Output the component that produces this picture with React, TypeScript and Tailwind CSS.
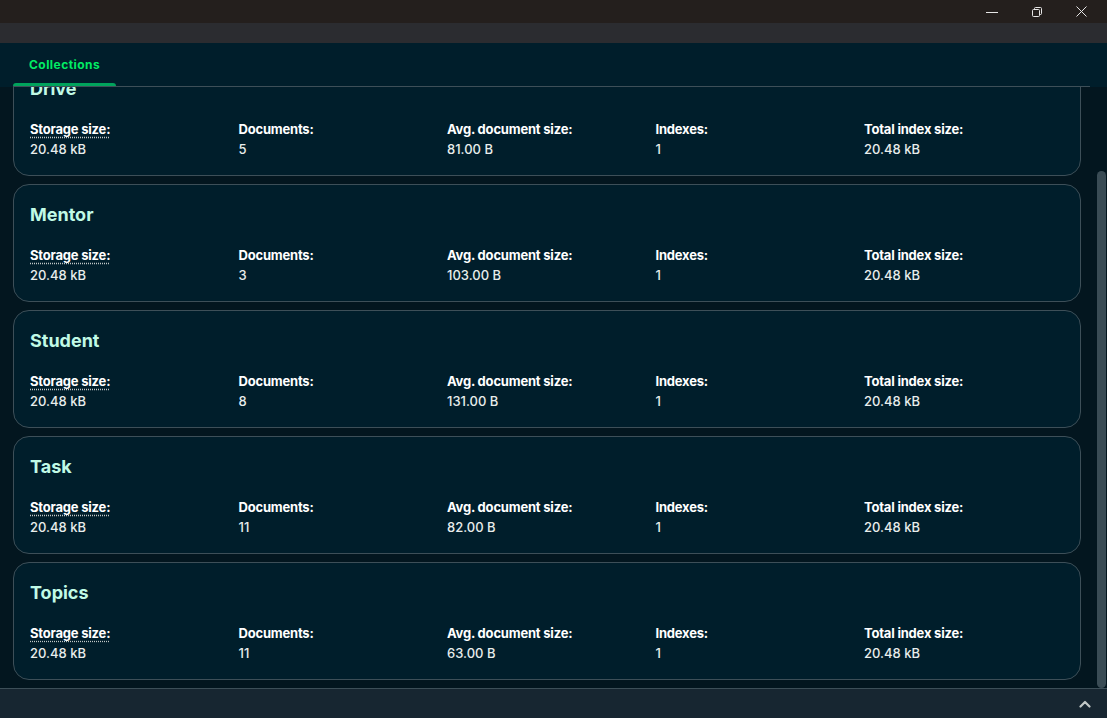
import { useLayoutEffect, useRef } from "react";

type Collection = {
  name: string;
  storage: string;
  documents: string;
  avgSize: string;
  indexes: string;
  indexSize: string;
};

const collections: Collection[] = [
  { name: "Drive", storage: "20.48 kB", documents: "5", avgSize: "81.00 B", indexes: "1", indexSize: "20.48 kB" },
  { name: "Mentor", storage: "20.48 kB", documents: "3", avgSize: "103.00 B", indexes: "1", indexSize: "20.48 kB" },
  { name: "Student", storage: "20.48 kB", documents: "8", avgSize: "131.00 B", indexes: "1", indexSize: "20.48 kB" },
  { name: "Task", storage: "20.48 kB", documents: "11", avgSize: "82.00 B", indexes: "1", indexSize: "20.48 kB" },
  { name: "Topics", storage: "20.48 kB", documents: "11", avgSize: "63.00 B", indexes: "1", indexSize: "20.48 kB" },
];

function Stat({ label, value, dotted }: { label: string; value: string; dotted?: boolean }) {
  return (
    <div className="flex flex-col">
      <span className="text-[13px] leading-4 font-bold text-white tracking-[-0.2px]">
        {dotted ? (
          <span className="underline decoration-dotted decoration-[#c1c7c6] underline-offset-[3px]">{label}</span>
        ) : (
          label
        )}
      </span>
      <span className="mt-[2px] text-[13px] leading-5 font-medium text-[#e8edeb]">{value}</span>
    </div>
  );
}

function CollectionCard({ c }: { c: Collection }) {
  return (
    <div className="h-[118px] rounded-2xl border border-[#3d4f58] bg-[#001e2b] pl-4 pt-4">
      <h2 className="text-[18px] leading-7 font-bold text-[#c0fae6]">{c.name}</h2>
      <div className="mt-[18px] grid grid-cols-[repeat(5,208.5px)]">
        <Stat label="Storage size:" value={c.storage} dotted />
        <Stat label="Documents:" value={c.documents} />
        <Stat label="Avg. document size:" value={c.avgSize} />
        <Stat label="Indexes:" value={c.indexes} />
        <Stat label="Total index size:" value={c.indexSize} />
      </div>
    </div>
  );
}

export default function App() {
  const scrollRef = useRef<HTMLDivElement>(null);

  // list is scrolled a little, so the first card sits under the tab bar
  useLayoutEffect(() => {
    if (scrollRef.current) scrollRef.current.scrollTop = 29;
  }, []);

  return (
    <div className="flex h-[718px] flex-col font-['Inter','Liberation_Sans',sans-serif] text-white">
      {/* title bar */}
      <div className="flex h-[23px] items-center justify-end bg-[#241f1d] pr-[3px]">
        <div className="flex h-full items-center">
          <button className="flex h-full w-[45px] items-center justify-center">
            <svg width="12" height="10" viewBox="0 0 12 10">
              <path d="M0 5.5h12" stroke="#e6e6e6" strokeWidth="1" />
            </svg>
          </button>
          <button className="flex h-full w-[45px] items-center justify-center">
            <svg width="10" height="10" viewBox="0 0 10 10" fill="none" stroke="#e6e6e6" strokeWidth="1">
              <rect x="0.5" y="2.5" width="7" height="7" rx="1" />
              <path d="M2.5 2.5V1.5a1 1 0 0 1 1-1h5a1 1 0 0 1 1 1v5a1 1 0 0 1-1 1h-1" />
            </svg>
          </button>
          <button className="flex h-full w-[45px] items-center justify-center">
            <svg width="11" height="11" viewBox="0 0 11 11" stroke="#e6e6e6" strokeWidth="1">
              <path d="M0.5 0.5l10 10M10.5 0.5l-10 10" />
            </svg>
          </button>
        </div>
      </div>
      <div className="h-[20px] bg-[#2b2c30]" />

      {/* main */}
      <div className="flex min-h-0 flex-1 flex-col bg-[#001e2b]">
        <div className="ml-[13px] mr-[17px] flex border-b border-[#3d4f58]">
          <button className="relative flex h-[43px] items-center px-4 text-[12px] font-bold tracking-[0.45px] text-[#00ed64]">
            Collections
            <span className="absolute bottom-0 left-0 right-0 h-[3px] rounded-t bg-[#00a35c]" />
          </button>
        </div>

        <div className="relative min-h-0 flex-1 bg-[#03161f]">
          <div ref={scrollRef} className="h-full overflow-hidden">
            <div className="flex flex-col gap-2 pb-2 pl-[13px] pr-[26px]">
              {collections.map((c) => (
                <CollectionCard key={c.name} c={c} />
              ))}
            </div>
          </div>
          <div className="absolute bottom-0 right-[1px] top-[84px] w-[9px] rounded-full bg-[#3a4c55]" />
        </div>
      </div>

      {/* bottom bar */}
      <div className="flex h-[30px] items-center justify-end border-t border-[#3d4f58] bg-[#172631] pr-[16px]">
        <svg width="12" height="8" viewBox="0 0 12 8" fill="none" stroke="#c1c7c6" strokeWidth="2.2" strokeLinecap="round" strokeLinejoin="round">
          <path d="M1.5 6.5L6 2l4.5 4.5" />
        </svg>
      </div>
    </div>
  );
}
